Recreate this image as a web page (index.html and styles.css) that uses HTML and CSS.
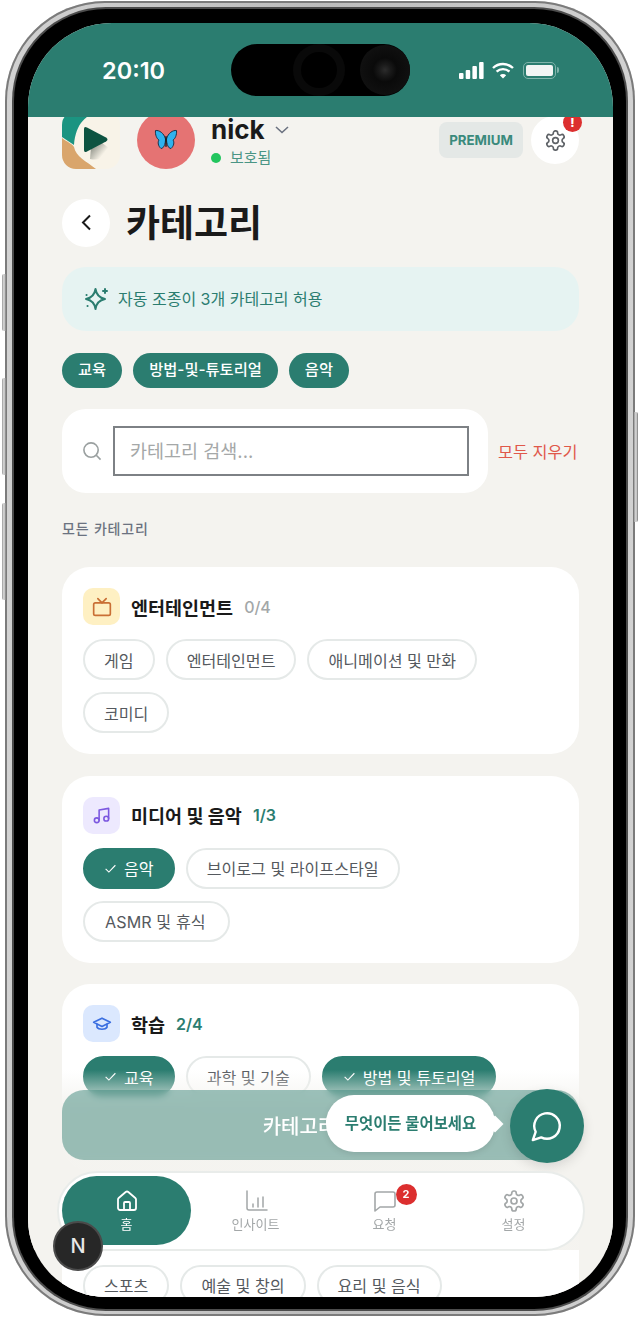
FILE: index.html
```html
<!DOCTYPE html>
<html lang="ko">
<head>
  <meta charset="UTF-8">
  <meta name="viewport" content="width=device-width, initial-scale=1.0">
  <title>카테고리</title>
  <link rel="stylesheet" href="styles.css">
</head>
<body>
  <svg class="defs" aria-hidden="true">
    <symbol id="i-gear" viewBox="0 0 24 24">
      <path d="M12.22 2h-.44a2 2 0 0 0-2 2v.18a2 2 0 0 1-1 1.73l-.43.25a2 2 0 0 1-2 0l-.15-.08a2 2 0 0 0-2.73.73l-.22.38a2 2 0 0 0 .73 2.73l.15.1a2 2 0 0 1 1 1.72v.51a2 2 0 0 1-1 1.74l-.15.09a2 2 0 0 0-.73 2.73l.22.38a2 2 0 0 0 2.73.73l.15-.08a2 2 0 0 1 2 0l.43.25a2 2 0 0 1 1 1.73V20a2 2 0 0 0 2 2h.44a2 2 0 0 0 2-2v-.18a2 2 0 0 1 1-1.73l.43-.25a2 2 0 0 1 2 0l.15.08a2 2 0 0 0 2.73-.73l.22-.39a2 2 0 0 0-.73-2.73l-.15-.08a2 2 0 0 1-1-1.74v-.5a2 2 0 0 1 1-1.74l.15-.09a2 2 0 0 0 .73-2.73l-.22-.38a2 2 0 0 0-2.73-.73l-.15.08a2 2 0 0 1-2 0l-.43-.25a2 2 0 0 1-1-1.73V4a2 2 0 0 0-2-2z"/>
      <circle cx="12" cy="12" r="3"/>
    </symbol>
    <symbol id="i-check" viewBox="0 0 24 24"><path d="M3 12.500l6 6L21 6"/></symbol>
  </svg>

  <div class="phone">
    <span class="side-btn side-a"></span>
    <span class="side-btn side-b"></span>
    <span class="side-btn side-c"></span>
    <span class="side-btn side-d"></span>
    <div class="bezel">
      <div class="screen">

        <div class="statusbar">
          <span class="clock">20:10</span>
          <div class="island"><span class="faceid"></span><span class="camera"></span></div>
          <div class="status-icons">
            <svg width="25" height="17" viewBox="0 0 25 17" fill="#fff">
              <rect x="0" y="11" width="4.500" height="6" rx="1"/>
              <rect x="6.700" y="8" width="4.500" height="9" rx="1"/>
              <rect x="13.400" y="4" width="4.500" height="13" rx="1"/>
              <rect x="20.100" y="0" width="4.500" height="17" rx="1"/>
            </svg>
            <svg class="wifi" width="22" height="17" viewBox="0 0 22 17" fill="none" stroke="#fff" stroke-width="2.400">
              <path d="M1 6a14.500 14.500 0 0 1 20 0"/>
              <path d="M4.600 9.600a9.400 9.400 0 0 1 12.800 0"/>
              <path d="M11 16.600l-3.200-3.400a4.600 4.600 0 0 1 6.400 0z" fill="#fff" stroke="none"/>
            </svg>
            <span class="battery"><span class="battery-fill"></span></span>
          </div>
        </div>

        <main class="content">
          <header class="topbar">
            <svg class="logo" width="58" height="58" viewBox="0 0 58 58">
              <defs>
                <linearGradient id="logoShade" x1="0.2" y1="0.2" x2="0.9" y2="0.9">
                  <stop offset="0" stop-color="#7f8379"/>
                  <stop offset="0.75" stop-color="#f8f3e8"/>
                </linearGradient>
              </defs>
              <rect width="58" height="58" rx="14" fill="#f8f3e8"/>
              <path d="M0 14a14 14 0 0 1 14-14h26C24 3 14 12 12 34L0 26z" fill="#1b9481"/>
              <path d="M0 27c5 4 11 6 12 9 2 10 12 14 22 22H14A14 14 0 0 1 0 44z" fill="#d9a56c"/>
              <path d="M30 24l18 14c-2 8-10 12-20 10z" fill="url(#logoShade)"/>
              <path d="M22 18q0-3 3-1.500l19 10q3 2 0 4l-19 10q-3 1.500-3-1.500z" fill="#0d5341"/>
            </svg>
            <div class="avatar">
              <svg width="24" height="24" viewBox="0 0 24 24">
                <path d="M11.500 11C10 5 5 2 1.500 2.500 1 7 3 11 5 12c-1.500 2-1 6 2 8.500 2.500 0 4.500-4 4.500-9.500z" fill="#2fb2ee" stroke="#16324a" stroke-width="1"/>
                <path d="M12.500 11C14 5 19 2 22.500 2.500 23 7 21 11 19 12c1.500 2 1 6-2 8.500-2.500 0-4.500-4-4.500-9.500z" fill="#2fb2ee" stroke="#16324a" stroke-width="1"/>
                <rect x="11.300" y="8" width="1.400" height="11" rx="0.700" fill="#1a1a1a"/>
              </svg>
            </div>
            <div class="who">
              <div class="who-name">
                <span>nick</span>
                <svg width="14" height="8" viewBox="0 0 14 8" fill="none" stroke="#6b7280" stroke-width="1.600"><path d="M1 1l6 5.500L13 1"/></svg>
              </div>
              <div class="who-status"><span class="dot"></span>보호됨</div>
            </div>
            <span class="premium">PREMIUM</span>
            <button class="gear-btn" type="button">
              <svg class="stroke-icon" width="23" height="23"><use href="#i-gear"/></svg>
              <span class="alert">!</span>
            </button>
          </header>

          <div class="title-row">
            <button class="back-btn" type="button">
              <svg width="11" height="17" viewBox="0 0 11 17" fill="none" stroke="#1a1a1a" stroke-width="2"><path d="M9 1.500L2 8.500l7 7"/></svg>
            </button>
            <h1>카테고리</h1>
          </div>

          <div class="banner">
            <svg class="banner-icon" width="24" height="24" viewBox="0 0 24 24" fill="none" stroke="#2b7d70" stroke-width="2" stroke-linejoin="round" stroke-linecap="round">
              <path d="M11.500 2c.8 5.700 3.600 8.800 9.500 10-5.900 1.200-8.700 4.300-9.500 10-.8-5.700-3.600-8.800-9.500-10 5.900-1.200 8.700-4.300 9.500-10z"/>
              <path d="M21 2v4M19 4h4"/>
              <path d="M3.500 19h.1M2.500 8h.1"/>
            </svg>
            <span class="banner-text">자동 조종이 3개 카테고리 허용</span>
          </div>

          <div class="picked">
            <span class="picked-chip">교육</span>
            <span class="picked-chip">방법-및-튜토리얼</span>
            <span class="picked-chip">음악</span>
          </div>

          <div class="search-row">
            <div class="search-box">
              <svg class="search-icon" width="20" height="20" viewBox="0 0 21 21" fill="none" stroke="#9aa0a0" stroke-width="1.700"><circle cx="9.500" cy="9.500" r="7.500"/><path d="M15 15l4.500 4.500"/></svg>
              <input class="search-input" type="text" placeholder="카테고리 검색...">
            </div>
            <span class="clear-all">모두 지우기</span>
          </div>

          <div class="section-label">모든 카테고리</div>

          <section class="card">
            <div class="card-head">
              <span class="card-icon bg-yellow">
                <svg width="20" height="20" viewBox="0 0 24 24" fill="none" stroke="#c96f35" stroke-width="2" stroke-linecap="round" stroke-linejoin="round"><rect x="2" y="7" width="20" height="15" rx="2"/><path d="M17 2l-5 5-5-5"/></svg>
              </span>
              <h2>엔터테인먼트</h2>
              <span class="count">0/4</span>
            </div>
            <div class="chips">
              <span class="chip">게임</span>
              <span class="chip">엔터테인먼트</span>
              <span class="chip">애니메이션 및 만화</span>
              <span class="chip">코미디</span>
            </div>
          </section>

          <section class="card">
            <div class="card-head">
              <span class="card-icon bg-purple">
                <svg width="19" height="19" viewBox="0 0 24 24" fill="none" stroke="#7c58e0" stroke-width="2" stroke-linecap="round" stroke-linejoin="round"><path d="M9 18V5l12-2v13"/><circle cx="6" cy="18" r="3"/><circle cx="18" cy="16" r="3"/></svg>
              </span>
              <h2>미디어 및 음악</h2>
              <span class="count active">1/3</span>
            </div>
            <div class="chips chips-narrow">
              <span class="chip on"><svg class="check"><use href="#i-check"/></svg>음악</span>
              <span class="chip">브이로그 및 라이프스타일</span>
              <span class="chip chip-wide">ASMR 및 휴식</span>
            </div>
          </section>

          <section class="card">
            <div class="card-head">
              <span class="card-icon bg-blue">
                <svg width="20" height="20" viewBox="0 0 24 24" fill="none" stroke="#3b6fe0" stroke-width="2" stroke-linecap="round" stroke-linejoin="round"><path d="M12 5L2 10l10 5 10-5z"/><path d="M6 12.500V16c2 3 10 3 12 0v-3.500"/></svg>
              </span>
              <h2>학습</h2>
              <span class="count active">2/4</span>
            </div>
            <div class="chips">
              <span class="chip on"><svg class="check"><use href="#i-check"/></svg>교육</span>
              <span class="chip">과학 및 기술</span>
              <span class="chip on"><svg class="check"><use href="#i-check"/></svg>방법 및 튜토리얼</span>
              <span class="chip chip-blank"></span>
            </div>
          </section>

          <section class="card">
            <div class="card-head">
              <span class="card-icon bg-yellow"></span>
            </div>
            <div class="chips">
              <span class="chip">스포츠</span>
              <span class="chip">예술 및 창의</span>
              <span class="chip">요리 및 음식</span>
            </div>
          </section>
        </main>

        <div class="fade"></div>
        <button class="save-bar" type="button">카테고리 저장</button>
        <div class="tooltip">무엇이든 물어보세요</div>
        <button class="fab" type="button">
          <svg width="34" height="34" viewBox="0 0 24 24" fill="none" stroke="#fff" stroke-width="1.700" stroke-linejoin="round"><path d="M7.900 20A9 9 0 1 0 4 16.100L2 22Z"/></svg>
        </button>

        <nav class="tabbar">
          <a class="tab current">
            <svg width="24" height="24" viewBox="0 0 24 24" fill="none" stroke="currentColor" stroke-width="1.800" stroke-linejoin="round"><path d="M3 10.500a2 2 0 0 1 .7-1.500l7-6a2 2 0 0 1 2.600 0l7 6a2 2 0 0 1 .7 1.500V19a2 2 0 0 1-2 2H5a2 2 0 0 1-2-2z"/><path d="M9 21v-7a1 1 0 0 1 1-1h4a1 1 0 0 1 1 1v7"/></svg>
            <span>홈</span>
          </a>
          <a class="tab">
            <svg width="24" height="24" viewBox="0 0 24 24" fill="none" stroke="currentColor" stroke-width="1.500" stroke-linecap="round"><path d="M3 2v17a2 2 0 0 0 2 2h18"/><path d="M9 18v-3M14 18V9M19 18V8"/></svg>
            <span>인사이트</span>
          </a>
          <a class="tab">
            <span class="tab-icon">
              <svg width="24" height="24" viewBox="0 0 24 24" fill="none" stroke="currentColor" stroke-width="1.600" stroke-linejoin="round"><path d="M22 16a2 2 0 0 1-2 2H7l-5 4V5a2 2 0 0 1 2-2h16a2 2 0 0 1 2 2z"/></svg>
              <b class="tab-badge">2</b>
            </span>
            <span>요청</span>
          </a>
          <a class="tab">
            <svg class="stroke-icon tab-gear" width="24" height="24"><use href="#i-gear"/></svg>
            <span>설정</span>
          </a>
        </nav>

        <div class="dev-badge">N</div>
      </div>
    </div>
  </div>
</body>
</html>
```

FILE: styles.css
```css
* {
  box-sizing: border-box;
}
html, body {
  margin: 0;
  padding: 0;
  background: #fff;
}
body {
  width: 640px;
  height: 1317px;
  overflow: hidden;
  font-family: Inter, "Noto Sans CJK KR", sans-serif;
  color: #1a1a1a;
}
button {
  font-family: inherit;
  border: none;
  cursor: pointer;
}
.defs {
  width: 0;
  height: 0;
  display: block;
}

/* phone frame */
.phone {
  position: relative;
  width: 630px;
  height: 1315px;
  margin: 1px 0 0 5px;
  padding: 8px 9px 7px 9px;
  border-radius: 100px;
  background: linear-gradient(90deg, #d2d2d2, #bcbcbc 50%, #d2d2d2);
  box-shadow: inset 0 0 0 2px #7b7b7b;
}
.bezel {
  height: 100%;
  padding: 14px 13px 12px 14px;
  border-radius: 92px;
  background: #000;
  box-shadow: 0 0 0 2px #4c4c4c;
}
.screen {
  position: relative;
  height: 100%;
  overflow: hidden;
  border-radius: 84px 84px 78px 78px;
  background: #f4f3ef;
}
.side-btn {
  position: absolute;
  width: 4px;
  left: -3px;
  background: linear-gradient(90deg, #999, #e2e2e2, #777);
  border-radius: 2px 0 0 2px;
}
.side-a { top: 273px; height: 57px; }
.side-b { top: 377px; height: 97px; }
.side-c { top: 502px; height: 97px; }
.side-d {
  top: 411px;
  height: 110px;
  left: auto;
  right: -3px;
  border-radius: 0 2px 2px 0;
}

/* status bar */
.statusbar {
  position: relative;
  z-index: 5;
  height: 94px;
  padding: 0 57px 0 74px;
  display: flex;
  align-items: center;
  justify-content: space-between;
  background: #2b7d70;
  color: #fff;
}
.clock {
  font-size: 23.500px;
  font-weight: 600;
}
.island {
  position: absolute;
  top: 21px;
  left: 203px;
  width: 179px;
  height: 52px;
  border-radius: 26px;
  background: #000;
}
.faceid {
  position: absolute;
  left: 62px;
  top: 0;
  width: 52px;
  height: 52px;
  border-radius: 50%;
  box-shadow: inset 0 0 0 8px #090909;
}
.camera {
  position: absolute;
  left: 129px;
  top: 1px;
  width: 50px;
  height: 50px;
  border-radius: 50%;
  background: radial-gradient(circle, #2c2c2c 0, #1a1a1a 16%, #0a0a0a 34%, #101010 70%, #000 100%);
}
.status-icons {
  display: flex;
  align-items: center;
  gap: 8px;
  margin-top: 1px;
}
.wifi {
  margin-right: 1px;
}
.battery {
  position: relative;
  width: 33px;
  height: 17px;
  padding: 2px;
  border: 1.500px solid #7fb3aa;
  border-radius: 5px;
}
.battery:after {
  content: "";
  position: absolute;
  right: -4px;
  top: 4px;
  width: 2px;
  height: 6px;
  background: #7fb3aa;
  border-radius: 0 2px 2px 0;
}
.battery-fill {
  display: block;
  height: 100%;
  background: #f2f5f4;
  border-radius: 2px;
}

/* scrolled content */
.content {
  margin-top: -7px;
  padding: 0 34px;
}
.topbar {
  height: 60px;
  display: flex;
  align-items: center;
}
.logo {
  flex: none;
  margin-right: 17px;
}
.avatar {
  flex: none;
  width: 58px;
  height: 58px;
  border-radius: 50%;
  background: #e57373;
  display: flex;
  align-items: center;
  justify-content: center;
  margin-right: 16px;
}
.who {
  flex: 1;
}
.who-name {
  display: flex;
  align-items: center;
  gap: 10px;
  font-size: 26px;
  font-weight: 700;
  line-height: 32px;
  margin-top: 1px;
}
.who-status {
  display: flex;
  align-items: center;
  gap: 9px;
  font-size: 15px;
  line-height: 20px;
  margin-top: 2px;
  color: #4a9585;
}
.dot {
  width: 10px;
  height: 10px;
  border-radius: 50%;
  background: #22c55e;
}
.premium {
  width: 84px;
  height: 36px;
  margin-right: 8px;
  border-radius: 8px;
  background: #e4e8e6;
  color: #3a8a7c;
  font-size: 13.300px;
  font-weight: 700;
  line-height: 36px;
  text-align: center;
}
.gear-btn {
  position: relative;
  width: 48px;
  height: 48px;
  padding: 0;
  border-radius: 50%;
  background: #fff;
  display: flex;
  align-items: center;
  justify-content: center;
}
.stroke-icon {
  fill: none;
  stroke: #5d6166;
  stroke-width: 1.700;
}
.alert {
  position: absolute;
  top: -3px;
  right: -3px;
  width: 19px;
  height: 19px;
  border-radius: 50%;
  background: #dc2f2f;
  color: #fff;
  font-size: 12px;
  font-weight: 800;
  line-height: 19px;
  text-align: center;
}

.title-row {
  display: flex;
  align-items: center;
  gap: 16px;
  margin-top: 27px;
}
.back-btn {
  width: 48px;
  height: 48px;
  padding: 0;
  border-radius: 50%;
  background: #fff;
  display: flex;
  align-items: center;
  justify-content: center;
}
h1 {
  margin: 3px 0 0;
  font-size: 37px;
  font-weight: 700;
  line-height: 48px;
}

.banner {
  display: flex;
  align-items: center;
  gap: 10px;
  height: 64px;
  margin-top: 19px;
  padding: 0 22px;
  border-radius: 24px;
  background: #e6f3f2;
  color: #2b7d70;
  font-size: 16px;
}
.banner-icon {
  flex: none;
}
.banner-text {
  margin-top: -2px;
}

.picked {
  display: flex;
  gap: 11px;
  margin-top: 22px;
}
.picked-chip {
  height: 35px;
  padding: 0 16px;
  border-radius: 18px;
  background: #2b7d70;
  color: #fff;
  font-size: 15.300px;
  font-weight: 500;
  line-height: 34px;
}

.search-row {
  display: flex;
  align-items: center;
  gap: 10px;
  margin-top: 21px;
}
.search-box {
  flex: 0 0 426px;
  height: 84px;
  display: flex;
  align-items: center;
  gap: 11px;
  padding: 0 19px 0 20px;
  border-radius: 24px;
  background: #fff;
}
.search-icon {
  flex: none;
}
.search-input {
  flex: 1;
  min-width: 0;
  height: 50px;
  padding: 0 15px;
  border: 2px solid #7d8185;
  background: #fff;
  font-family: inherit;
  font-size: 18.500px;
  outline: none;
}
.search-input::placeholder {
  color: #a5a8a8;
}
.clear-all {
  color: #e0584a;
  font-size: 16.300px;
  white-space: nowrap;
}

.section-label {
  margin-top: 27px;
  font-size: 14px;
  font-weight: 500;
  line-height: 18px;
  letter-spacing: 0.800px;
  color: #6b7280;
}

/* category cards */
.card {
  margin-top: 21.500px;
  padding: 21px;
  border-radius: 28px;
  background: #fff;
}
.section-label + .card {
  margin-top: 29px;
}
.card-head {
  display: flex;
  align-items: center;
  gap: 11px;
  height: 37px;
  margin-bottom: 14px;
}
.card-icon {
  width: 37px;
  height: 37px;
  border-radius: 10px;
  display: flex;
  align-items: center;
  justify-content: center;
}
.bg-yellow { background: #fef0c3; }
.bg-purple { background: #ede9fe; }
.bg-blue { background: #dbe8fe; }
h2 {
  margin: 0;
  font-size: 18.500px;
  font-weight: 700;
}
.count {
  font-size: 16px;
  font-weight: 500;
  color: #a3a7a8;
}
.count.active {
  color: #2b7d70;
  font-weight: 600;
}
.chips {
  display: flex;
  flex-wrap: wrap;
  gap: 12px 11px;
}
.chips-narrow {
  padding-right: 20px;
}
.chip {
  display: flex;
  align-items: center;
  height: 41px;
  padding: 0 19px;
  border: 2px solid #e5e9e8;
  border-radius: 21px;
  background: #fff;
  color: #55595e;
  font-size: 16.100px;
  white-space: nowrap;
}
.chip-wide {
  padding: 0 22px 0 20px;
  letter-spacing: 0.100px;
}
.chip-blank {
  width: 122px;
}
.chip.on {
  border-color: #2b7d70;
  background: #2b7d70;
  color: #fff;
}
.check {
  width: 13px;
  height: 13px;
  margin-right: 7px;
  fill: none;
  stroke: #fff;
  stroke-width: 2;
}

/* things floating over the list */
.fade {
  position: absolute;
  left: 0;
  right: 0;
  top: 1047px;
  height: 180px;
  background: linear-gradient(rgba(244, 243, 239, 0), rgba(244, 243, 239, 0.5) 20px, rgba(244, 243, 239, 0.96) 36px);
}
.save-bar {
  position: absolute;
  left: 34px;
  top: 1067px;
  width: 517px;
  height: 70px;
  border-radius: 22px;
  background: rgba(43, 125, 112, 0.46);
  backdrop-filter: blur(3px);
  color: #fff;
  font-size: 20px;
  font-weight: 500;
}
.tooltip {
  position: absolute;
  left: 298px;
  top: 1072px;
  width: 169px;
  height: 57px;
  border-radius: 28px;
  background: #fff;
  box-shadow: 0 2px 6px rgba(0, 0, 0, 0.1);
  color: #2b7d70;
  font-size: 15.400px;
  font-weight: 600;
  line-height: 57px;
  text-align: center;
}
.tooltip:after {
  content: "";
  position: absolute;
  right: -6px;
  top: 23px;
  width: 12px;
  height: 12px;
  background: #fff;
  transform: rotate(45deg);
}
.fab {
  position: absolute;
  left: 482px;
  top: 1066px;
  width: 74px;
  height: 74px;
  padding: 0;
  border-radius: 50%;
  background: #2b7d70;
  box-shadow: 0 4px 12px rgba(0, 0, 0, 0.12);
  display: flex;
  align-items: center;
  justify-content: center;
}
.tabbar {
  position: absolute;
  left: 29px;
  top: 1148px;
  width: 528px;
  height: 80px;
  padding: 3px;
  display: grid;
  grid-template-columns: repeat(4, 129px);
  border: 2px solid #e9ecea;
  border-radius: 40px;
  background: #fff;
}
.tab {
  height: 69px;
  padding-top: 13px;
  display: flex;
  flex-direction: column;
  align-items: center;
  gap: 2px;
  border-radius: 35px;
  color: #a3a7a8;
  font-size: 13px;
  line-height: 18px;
}
.tab.current {
  background: #2b7d70;
  color: #fff;
}
.tab-gear {
  stroke: #a3a7a8;
}
.tab-icon {
  position: relative;
  height: 24px;
}
.tab-badge {
  position: absolute;
  left: 23px;
  top: -5px;
  width: 21px;
  height: 21px;
  border-radius: 50%;
  background: #dc2f2f;
  color: #fff;
  font-size: 11px;
  font-weight: 700;
  line-height: 21px;
  text-align: center;
}
.dev-badge {
  position: absolute;
  left: 25px;
  top: 1198px;
  width: 50px;
  height: 50px;
  border-radius: 50%;
  border: 2px solid #4a4a4a;
  background: #272727;
  color: #e8e8e8;
  font-size: 20px;
  font-weight: 500;
  line-height: 46px;
  text-align: center;
}
```
